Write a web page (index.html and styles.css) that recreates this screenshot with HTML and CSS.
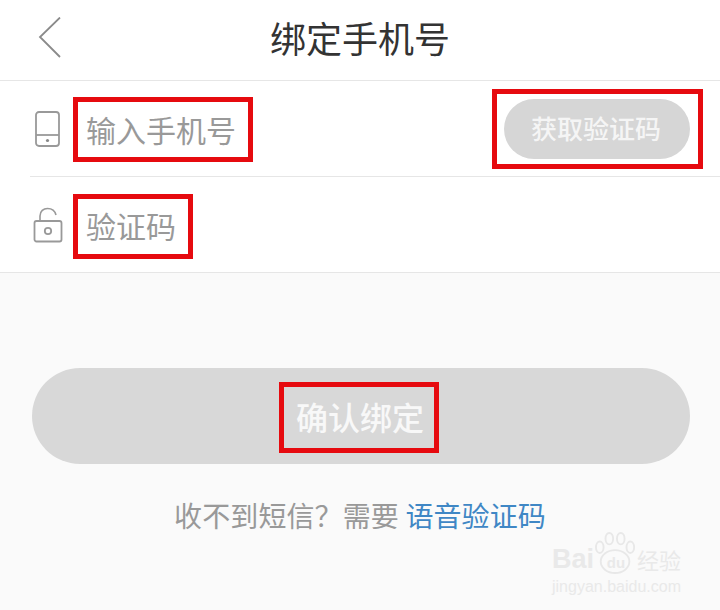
FILE: index.html
```html
<!DOCTYPE html>
<html lang="zh-CN">

<head>
   <meta charset="UTF-8">
   <meta name="viewport" content="width=device-width, initial-scale=1.0">
   <link rel="stylesheet" href="styles.css">
   <title>绑定手机号</title>
</head>

<body>
   <main>
      <header class="top-bar">
         <svg class="back-icon" width="26" height="44" viewBox="0 0 26 44">
            <path d="M22 0.5 L2 20 L22 40" fill="none" stroke="#8a8a8a" stroke-width="1.8"/>
         </svg>
         <h1 class="title">绑定手机号</h1>
      </header>

      <section class="form">
         <div class="row row-phone">
            <svg class="row-icon" width="28" height="38" viewBox="0 0 28 38">
               <rect x="2" y="2" width="23" height="34" rx="3" fill="none" stroke="#999" stroke-width="1.8"/>
               <path d="M2 25 H25" stroke="#999" stroke-width="1.8"/>
               <circle cx="13.5" cy="30.5" r="1.6" fill="#888"/>
            </svg>
            <span class="placeholder">输入手机号</span>
            <span class="code-btn">获取验证码</span>
         </div>
         <div class="row">
            <svg class="row-icon" width="30" height="36" viewBox="0 0 30 36">
               <path d="M7 13 V9 C7 4 10.5 1.5 14.5 1.5 C18.5 1.5 22 4 23 8" fill="none" stroke="#999" stroke-width="1.6"/>
               <rect x="1.5" y="14" width="27" height="20.5" rx="2" fill="none" stroke="#999" stroke-width="1.8"/>
               <circle cx="15" cy="24" r="3.2" fill="none" stroke="#999" stroke-width="1.8"/>
            </svg>
            <span class="placeholder">验证码</span>
         </div>
      </section>

      <section class="actions">
         <div class="confirm-btn">确认绑定</div>
         <p class="hint">收不到短信？需要 <a class="voice-link">语音验证码</a></p>
      </section>

      <!-- red marks drawn over the screenshot -->
      <div class="mark mark-phone"></div>
      <div class="mark mark-send"></div>
      <div class="mark mark-code"></div>
      <div class="mark mark-confirm"></div>

      <div class="watermark">
         <div class="wm-logo">
            <span class="wm-bai">Bai</span>
            <svg class="wm-paw" width="42" height="42" viewBox="0 0 44 44">
               <ellipse cx="5" cy="16" rx="4" ry="6" fill="none" stroke="#e8e8e8" stroke-width="2"/>
               <ellipse cx="15" cy="7" rx="4" ry="6" fill="none" stroke="#e8e8e8" stroke-width="2"/>
               <ellipse cx="27" cy="7" rx="4" ry="6" fill="none" stroke="#e8e8e8" stroke-width="2"/>
               <ellipse cx="37" cy="16" rx="4" ry="6" fill="none" stroke="#e8e8e8" stroke-width="2"/>
               <ellipse cx="21" cy="31" rx="15" ry="12" fill="none" stroke="#e8e8e8" stroke-width="2"/>
            </svg>
            <span class="wm-du">du</span>
            <span class="wm-cn">经验</span>
         </div>
         <div class="wm-url">jingyan.baidu.com</div>
      </div>
   </main>
</body>

</html>
```

FILE: styles.css
```css
* {
   padding: 0;
   margin: 0;
   box-sizing: border-box;
}

body {
   font-family: "Noto Sans CJK SC", "Liberation Sans", sans-serif;
   background-color: #fafafa;
}

main {
   position: relative;
   width: 720px;
   height: 610px;
   overflow: hidden;
}

.top-bar {
   position: relative;
   display: flex;
   align-items: center;
   justify-content: center;
   height: 81px;
   background-color: #fff;
   border-bottom: 1px solid #e6e6e6;
}

.back-icon {
   position: absolute;
   left: 38px;
   top: 17px;
}

.title {
   font-size: 36px;
   font-weight: 400;
   line-height: 1;
   color: #333;
   margin-top: -6px;
}

.form {
   background-color: #fff;
   border-bottom: 1px solid #e6e6e6;
   height: 192px;
   padding-left: 30px;
}

.row {
   display: flex;
   align-items: center;
   height: 96px;
   padding-right: 30px;
}

.row-phone {
   border-bottom: 1px solid #e6e6e6;
}

.row-icon {
   flex: none;
   margin-left: 3px;
   width: 30px;
}

.placeholder {
   margin-left: 23px;
   font-size: 30px;
   line-height: 1;
   color: #999;
}

.code-btn {
   margin-left: auto;
   width: 186px;
   height: 60px;
   border-radius: 30px;
   background-color: #d6d6d6;
   color: #f5f5f5;
   font-size: 26px;
   font-weight: 500;
   line-height: 58px;
   text-align: center;
   text-indent: -2px;
}

.actions {
   padding: 95px 30px 0 32px;
}

.confirm-btn {
   height: 96px;
   border-radius: 48px;
   background-color: #d8d8d8;
   color: #f8f8f8;
   font-size: 32px;
   font-weight: 500;
   line-height: 96px;
   text-align: center;
   text-indent: -2px;
}

.hint {
   margin-top: 30px;
   padding-right: 2px;
   font-size: 28px;
   line-height: 42px;
   letter-spacing: 0.12px;
   color: #999;
   text-align: center;
}

.voice-link {
   color: #3f87c5;
}

.mark {
   position: absolute;
   border: 5px solid #e60a0f;
}

.mark-phone {
   left: 73px;
   top: 97px;
   width: 180px;
   height: 65px;
}

.mark-send {
   left: 492px;
   top: 89px;
   width: 211px;
   height: 80px;
}

.mark-code {
   left: 73px;
   top: 194px;
   width: 120px;
   height: 65px;
}

.mark-confirm {
   left: 279px;
   top: 382px;
   width: 160px;
   height: 71px;
}

.watermark {
   position: absolute;
   left: 552px;
   top: 532px;
   width: 130px;
   color: #e9e9e9;
}

.wm-logo {
   display: flex;
   align-items: flex-end;
   height: 42px;
   font-family: "Liberation Sans", sans-serif;
   font-weight: 700;
}

.wm-bai {
   width: 43px;
   font-size: 27px;
   line-height: 30px;
}

.wm-paw {
   flex: none;
}

.wm-du {
   margin-left: -36px;
   width: 30px;
   font-size: 15px;
   line-height: 22px;
   text-align: center;
}

.wm-cn {
   margin-left: 6px;
   font-family: "Noto Sans CJK SC", sans-serif;
   font-size: 22px;
   font-weight: 400;
   line-height: 30px;
   white-space: nowrap;
}

.wm-url {
   margin-top: 3px;
   font-family: "Liberation Sans", sans-serif;
   font-size: 16px;
   line-height: 20px;
   white-space: nowrap;
}
```
